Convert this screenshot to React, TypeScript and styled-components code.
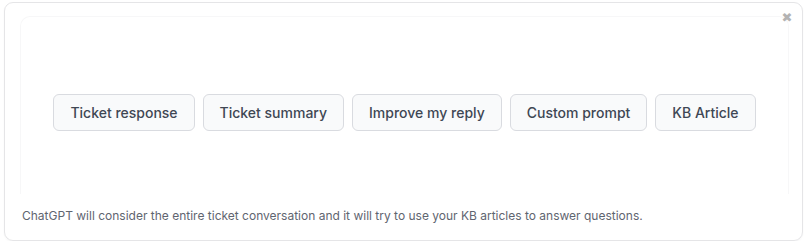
import React from "react";
import styled, { createGlobalStyle } from "styled-components";

const Global = createGlobalStyle`
  html, body { margin: 0; padding: 0; background: #ffffff; }
  body { font-family: Inter, "Noto Sans", sans-serif; }
`;

const Card = styled.div`
  box-sizing: border-box;
  margin: 2px 0 0 4px;
  width: 799px;
  height: 239px;
  border: 1px solid #e5e5e7;
  border-radius: 9px;
  box-shadow: 0 1px 2px rgba(0, 0, 0, 0.04);
  position: relative;
  padding: 13px 13px 0 15px;
  display: flex;
  flex-direction: column;
`;

const Close = styled.button`
  position: absolute;
  top: 8px;
  right: 8px;
  border: 0;
  background: none;
  padding: 0;
  width: 14px;
  height: 14px;
  color: #b3b3b3;
  font-size: 13px;
  line-height: 14px;
  font-family: "DejaVu Sans", sans-serif;
  cursor: pointer;
`;

const Panel = styled.div`
  box-sizing: border-box;
  height: 178px;
  border: 1px solid #f7f7f8;
  border-bottom: 0;
  border-radius: 10px 10px 0 0;
  display: flex;
  align-items: center;
  justify-content: center;
  gap: 8px;
  padding-top: 13px;
`;

const PromptButton = styled.button`
  box-sizing: border-box;
  height: 37px;
  padding: 0 16px;
  border: 1px solid #d9dbe0;
  border-radius: 6px;
  background: #f9fafb;
  color: #3f4754;
  font-family: Inter, "Noto Sans", sans-serif;
  font-size: 14px;
  font-weight: 500;
  cursor: pointer;
`;

const Footer = styled.p`
  margin: 14px 0 0 2px;
  font-size: 12px;
  line-height: 16px;
  color: #5f6570;
`;

const prompts = [
  "Ticket response",
  "Ticket summary",
  "Improve my reply",
  "Custom prompt",
  "KB Article",
];

export default function App() {
  return (
    <>
      <Global />
      <Card>
        <Close aria-label="Close">✖</Close>
        <Panel>
          {prompts.map((p) => (
            <PromptButton key={p}>{p}</PromptButton>
          ))}
        </Panel>
        <Footer>
          ChatGPT will consider the entire ticket conversation and it will try to use your KB articles to answer questions.
        </Footer>
      </Card>
    </>
  );
}
